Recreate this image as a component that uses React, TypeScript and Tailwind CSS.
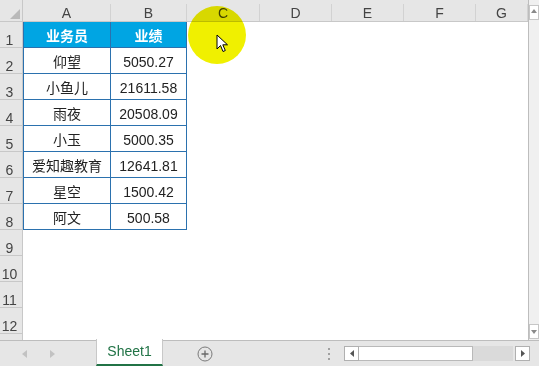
import React from 'react';

const font = { fontFamily: '"Liberation Sans", "Noto Sans CJK SC", sans-serif' };

const cols = [
  { label: 'A', w: 'w-[88px]' },
  { label: 'B', w: 'w-[76px]' },
  { label: 'C', w: 'w-[73px]' },
  { label: 'D', w: 'w-[72px]' },
  { label: 'E', w: 'w-[72px]' },
  { label: 'F', w: 'w-[72px]' },
  { label: 'G', w: 'flex-1' },
];

const data: [string, string][] = [
  ['仰望', '5050.27'],
  ['小鱼儿', '21611.58'],
  ['雨夜', '20508.09'],
  ['小玉', '5000.35'],
  ['爱知趣教育', '12641.81'],
  ['星空', '1500.42'],
  ['阿文', '500.58'],
];

const RowHead: React.FC<{ n?: number; h?: string }> = ({ n, h = 'h-[26px]' }) => (
  <div className={`w-[23px] ${h} shrink-0 bg-[#e6e6e6] border-r border-b border-[#c8c8c8] flex items-end justify-center pr-[3px] leading-none text-[14px] text-[#444]`}>
    {n}
  </div>
);

const Cell: React.FC<{ w: string; first?: boolean; head?: boolean; children?: React.ReactNode }> = ({ w, first, head, children }) => (
  <div
    className={`${w} h-[26px] shrink-0 flex items-end justify-center pb-[1px] leading-[20px] text-[14px] border-r border-b border-[#2b71ae] ${first ? 'border-l' : ''} ${head ? 'bg-[#00a5e3] text-white font-bold' : 'bg-white text-[#222]'}`}
  >
    {children}
  </div>
);

const Cursor = () => (
  <svg width="13" height="19" viewBox="0 0 13 19" className="absolute left-[216px] top-[34px]">
    <path d="M1 1 L1 15 L4.5 11.5 L7 17.5 L9.3 16.5 L6.8 10.8 L11.5 10.8 Z" fill="#fff" stroke="#000" strokeWidth="1" strokeLinejoin="round" />
  </svg>
);

export default function App() {
  return (
    <div className="relative w-[539px] h-[366px] overflow-hidden bg-white select-none" style={font}>
      <div className="flex h-[341px] border-b border-[#bdbdbd]">
        {/* grid */}
        <div className="flex-1 flex flex-col">
          {/* column header */}
          <div className="flex h-[22px] bg-[#e6e6e6] border-b border-[#c8c8c8]">
            <div className="w-[23px] shrink-0 relative border-r border-[#c8c8c8]">
              <svg width="10" height="10" className="absolute right-[2px] bottom-[2px]">
                <path d="M10 0 L10 10 L0 10 Z" fill="#b9b9b9" />
              </svg>
            </div>
            {cols.map((c) => (
              <div key={c.label} className={`${c.w} shrink-0 flex items-end pt-[4px]`}>
                <div className="flex-1 h-full flex items-center justify-center pt-[2px] text-[14px] text-[#444] border-r border-[#d2d2d2]">
                  {c.label}
                </div>
              </div>
            ))}
          </div>
          {/* row 1 */}
          <div className="flex">
            <RowHead n={1} />
            <Cell w="w-[88px]" first head>业务员</Cell>
            <Cell w="w-[76px]" head>业绩</Cell>
          </div>
          {data.map(([name, v], i) => (
            <div key={name} className="flex">
              <RowHead n={i + 2} />
              <Cell w="w-[88px]" first>{name}</Cell>
              <Cell w="w-[76px]">{v}</Cell>
            </div>
          ))}
          {[9, 10, 11, 12].map((n) => (
            <div key={n} className="flex">
              <RowHead n={n} />
            </div>
          ))}
          <div className="flex flex-1">
            <div className="w-[23px] h-full bg-[#e6e6e6] border-r border-[#c8c8c8]" />
          </div>
        </div>
        {/* vertical scrollbar */}
        <div className="w-[11px] shrink-0 bg-[#f0f0f0] border-l border-[#bdbdbd] flex flex-col items-center justify-between pt-[5px] pb-[1px]">
          <div className="w-[10px] h-[15px] bg-white border border-[#c6c6c6] flex items-start justify-center pt-[3px]">
            <svg width="6" height="4"><path d="M3 0 L6 4 L0 4 Z" fill="#8a8a8a" /></svg>
          </div>
          <div className="w-[10px] h-[15px] bg-white border border-[#c6c6c6] flex items-end justify-center pb-[4px]">
            <svg width="6" height="4"><path d="M0 0 L6 0 L3 4 Z" fill="#8a8a8a" /></svg>
          </div>
        </div>
      </div>

      {/* sheet bar */}
      <div className="flex items-stretch h-[25px] bg-[#e6e6e6]">
        <div className="w-[96px] shrink-0 flex items-center">
          <svg width="5" height="8" className="ml-[22px]"><path d="M5 0 L5 8 L0 4 Z" fill="#c2c2c2" /></svg>
          <svg width="5" height="8" className="ml-[23px]"><path d="M0 0 L0 8 L5 4 Z" fill="#c2c2c2" /></svg>
        </div>
        <div className="w-[67px] shrink-0 -mt-[2px] bg-white border-x border-[#c8c8c8] border-b-2 border-b-[#217346] flex items-center justify-center text-[14px] text-[#217346]">
          Sheet1
        </div>
        <div className="w-[165px] shrink-0 relative flex items-center">
          <svg width="16" height="16" className="ml-[34px]">
            <circle cx="8" cy="8" r="7" fill="none" stroke="#7a7a7a" strokeWidth="1" />
            <path d="M8 4.5 V11.5 M4.5 8 H11.5" stroke="#6a6a6a" strokeWidth="1.3" />
          </svg>
        </div>
        <div className="w-[3px] shrink-0 flex flex-col justify-center gap-[3px]">
          <div className="w-[2px] h-[2px] bg-[#a0a0a0]" />
          <div className="w-[2px] h-[2px] bg-[#a0a0a0]" />
          <div className="w-[2px] h-[2px] bg-[#a0a0a0]" />
        </div>
        <div className="w-[13px] shrink-0" />
        <div className="flex items-center h-full">
          <div className="w-[15px] h-[15px] bg-white border border-[#b0b0b0] flex items-center justify-center">
            <svg width="4" height="7"><path d="M4 0 L4 7 L0 3.5 Z" fill="#555" /></svg>
          </div>
          <div className="w-[114px] h-[15px] bg-white border-y border-r border-[#b9b9b9]" />
          <div className="w-[40px] h-[15px] bg-[#dadada]" />
          <div className="w-[2px]" />
          <div className="w-[15px] h-[15px] bg-white border border-[#b0b0b0] flex items-center justify-center">
            <svg width="4" height="7"><path d="M0 0 L0 7 L4 3.5 Z" fill="#555" /></svg>
          </div>
        </div>
      </div>

      {/* highlight + cursor */}
      <div className="absolute left-[188px] top-[6px] w-[58px] h-[58px] rounded-full bg-[#f0f000] mix-blend-multiply" />
      <Cursor />
    </div>
  );
}
